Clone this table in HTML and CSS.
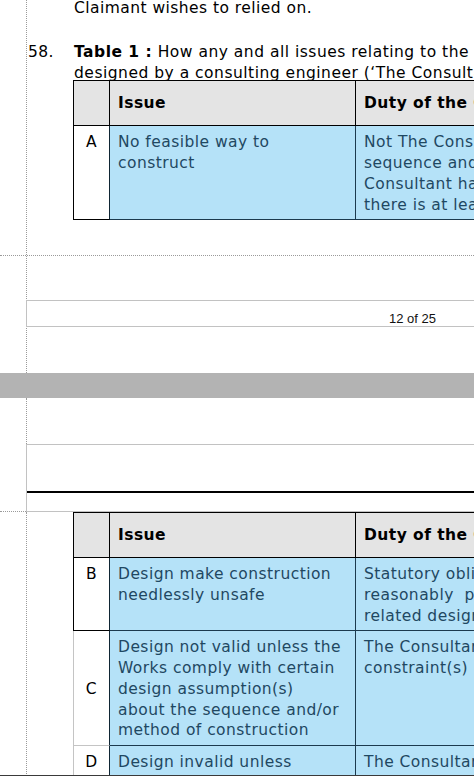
FILE: index.html
```html
<!DOCTYPE html>
<html lang="en">
<head>
<meta charset="utf-8">
<title>Document viewer</title>
<link rel="stylesheet" href="styles.css">
</head>
<body>
<div class="viewer">
  <section class="page page-one">
    <div class="guide-col body-area">
      <p class="para cont">Claimant wishes to relied on.</p>
      <div class="numbered">
        <span class="num">58.</span>
        <div class="num-body">
          <p class="para lead"><b>Table 1 :</b> How any and all issues relating to the construction sequence<br>designed by a consulting engineer (‘The Consultant’) are to be allocated</p>
          <table class="issues first">
            <tr class="head">
              <th class="c1"></th>
              <th class="c2">Issue</th>
              <th class="c3">Duty of the Consultant</th>
            </tr>
            <tr>
              <td class="c1">A</td>
              <td class="c2">No feasible way to<br>construct</td>
              <td class="c3">Not The Consultant’s duty to specify a construction<br>sequence and method of construction unless The<br>Consultant has reason to believe that<br>there is at least one practicable method</td>
            </tr>
          </table>
        </div>
      </div>
    </div>
    <div class="hguide"></div>
    <div class="guide-col foot-area">
      <div class="footer-box"><span class="page-no">12 of 25</span></div>
    </div>
  </section>
  <div class="page-gap"></div>
  <section class="page page-two">
    <div class="guide-col head-top"></div>
    <div class="head-row">
      <div class="head-spacer"></div>
      <div class="header-box"><div class="rule"></div></div>
    </div>
    <div class="guide-col body-two">
      <table class="issues second">
        <tr class="head">
          <th class="c1"></th>
          <th class="c2">Issue</th>
          <th class="c3">Duty of the Consultant</th>
        </tr>
        <tr>
          <td class="c1">B</td>
          <td class="c2">Design make construction<br>needlessly unsafe</td>
          <td class="c3">Statutory obligation to eliminate, so far as<br>reasonably&nbsp; practicable, foreseeable risks in<br>related design work</td>
        </tr>
        <tr class="split">
          <td class="c1 mid">C</td>
          <td class="c2">Design not valid unless the<br>Works comply with certain<br>design assumption(s)<br>about the sequence and/or<br>method of construction</td>
          <td class="c3">The Consultant must clearly state the<br>constraint(s)</td>
        </tr>
        <tr class="split last">
          <td class="c1">D</td>
          <td class="c2">Design invalid unless<br>temporary works are provided</td>
          <td class="c3">The Consultant must identify the<br>temporary works required</td>
        </tr>
      </table>
    </div>
  </section>
</div>
</body>
</html>
```

FILE: styles.css
```css
html, body {
  margin: 0;
  padding: 0;
  background: #ffffff;
}

body {
  width: 474px;
  height: 776px;
  overflow: hidden;
  font-family: "DejaVu Sans", Verdana, sans-serif;
  font-size: 15.5px;
  letter-spacing: 0.45px;
  line-height: 20.75px;
  color: #000000;
}

.viewer {
  height: 775px;
  border-bottom: 1px solid #3a3a3a;
  overflow: hidden;
}

.guide-col {
  margin-left: 26px;
  border-left: 1px dotted #9a9a9a;
}

/* ---------- page one ---------- */
.page-one {
  height: 373px;
}

.body-area {
  display: flow-root;
  height: 255px;
}

.para {
  margin: 0;
  white-space: nowrap;
}

.lead {
  letter-spacing: 0.5px;
}

.cont {
  margin-top: -2px;
  padding-left: 47px;
}

.numbered {
  display: flex;
  margin-top: 23px;
}

.num {
  flex: none;
  width: 46px;
  margin-left: 1px;
}

.num-body {
  flex: none;
}

.hguide {
  height: 0;
  border-top: 1px dotted #9a9a9a;
}

.foot-area {
  display: flow-root;
  height: 117px;
  padding-top: 44px;
  box-sizing: border-box;
}

.footer-box {
  height: 15px;
  border-top: 1px solid #c2c2c2;
  border-bottom: 1px solid #c2c2c2;
  border-left: 1px solid #c2c2c2;
  margin-left: -1px;
  padding-left: 362px;
  padding-top: 10px;
}

.page-no {
  display: block;
  font-family: "Liberation Sans", Arial, sans-serif;
  font-size: 13px;
  letter-spacing: 0;
  line-height: 15px;
  color: #111111;
  white-space: nowrap;
}

.page-gap {
  height: 25px;
  background: #b3b3b3;
}

/* ---------- page two ---------- */
.head-top {
  height: 46px;
}

.head-row {
  display: flex;
  height: 68px;
}

.head-spacer {
  flex: none;
  width: 26px;
  border-bottom: 1px dotted #9a9a9a;
  box-sizing: border-box;
}

.header-box {
  flex: 1;
  border: 1px solid #c2c2c2;
  border-right: none;
  padding-top: 46px;
  box-sizing: border-box;
}

.rule {
  height: 2px;
  background: #000000;
}

.body-two {
  display: flow-root;
  height: 300px;
  padding-left: 46px;
}

/* ---------- tables ---------- */
.issues {
  table-layout: fixed;
  border-collapse: separate;
  border-spacing: 0;
  border-top: 1px solid #000000;
  width: 534px;
}

.issues.first {
  margin-top: -3px;
  margin-left: -1px;
}

.issues th,
.issues td {
  vertical-align: top;
  text-align: left;
  white-space: nowrap;
  overflow: hidden;
  padding: 6px 8px 4px 8px;
  border-right: 1px solid #1c3a4e;
  border-bottom: 1px solid #1c3a4e;
}

.issues .c1 {
  width: 35px;
  padding-left: 0;
  padding-right: 0;
  text-align: center;
  border-left: 1px solid #000000;
  border-right-color: #0f2533;
  border-bottom-color: #000000;
  background: #ffffff;
  color: #000000;
}

.issues .c2 {
  width: 229px;
}

.issues .c3 {
  width: 234px;
}

.issues td.c2,
.issues td.c3 {
  background: #b5e2f8;
  color: #1f4862;
}

.issues .head th {
  height: 44px;
  padding-top: 0;
  padding-bottom: 0;
  vertical-align: middle;
  background: #e4e4e4;
  font-weight: bold;
  color: #000000;
  border-right-color: #000000;
  border-bottom-color: #000000;
}

.issues .head th.c1 {
  background: #e4e4e4;
}

.issues td.mid {
  vertical-align: middle;
}

.issues .split td.c1 {
  border-left-color: #c4c4c4;
  border-bottom-color: #c4c4c4;
}
```
